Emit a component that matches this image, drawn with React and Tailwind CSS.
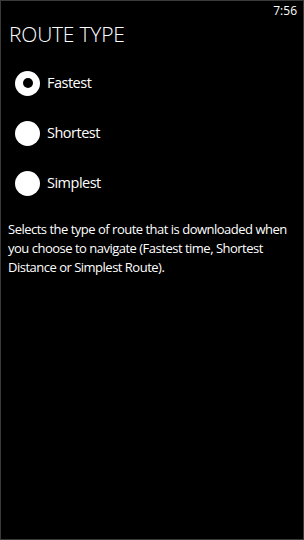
export default function App() {
  const options = [
    { label: "Fastest", selected: true },
    { label: "Shortest", selected: false },
    { label: "Simplest", selected: false },
  ];
  return (
    <div
      className="w-[304px] h-[540px] bg-black border border-[#3a3a3a] text-white flex flex-col"
      style={{ fontFamily: '"Open Sans", "Noto Sans", sans-serif' }}
    >
      <div className="flex justify-end pr-[6px] pt-[1px] h-[18px] text-[12px] leading-[18px]">7:56</div>
      <div className="pl-[8px] mt-[0px] text-[21px] leading-[30px] font-light tracking-[-0.2px]">ROUTE TYPE</div>
      <div className="flex flex-col mt-[9px] pl-[14px]">
        {options.map((o) => (
          <div key={o.label} className="flex items-center h-[50px] gap-[7px]">
            <div className="w-[25px] h-[25px] rounded-full bg-white flex items-center justify-center">
              {o.selected && <div className="w-[10px] h-[10px] rounded-full bg-black" />}
            </div>
            <span className="text-[14.5px] leading-[20px] tracking-[-0.5px]">{o.label}</span>
          </div>
        ))}
      </div>
      <p className="mt-[12px] pl-[7px] pr-[8px] text-[13px] leading-[19px] tracking-[-0.5px]">
        Selects the type of route that is downloaded when you choose to navigate (Fastest time, Shortest Distance or Simplest Route).
      </p>
    </div>
  );
}
